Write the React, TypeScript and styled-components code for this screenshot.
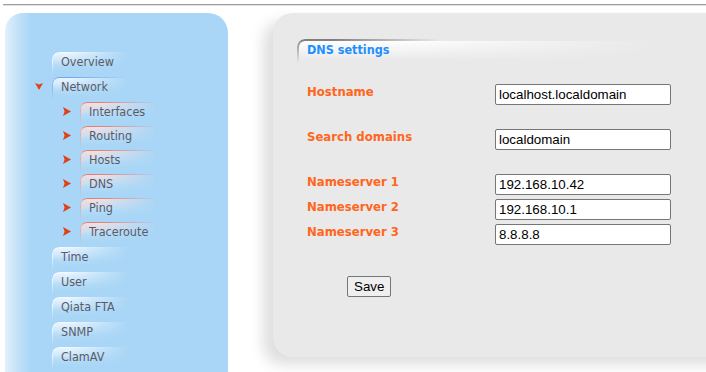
import React from 'react';
import styled, { createGlobalStyle } from 'styled-components';

const GlobalStyle = createGlobalStyle`
  html, body {
    margin: 0;
    padding: 0;
    background: #ffffff;
    overflow: hidden;
  }
  body {
    font-family: 'DejaVu Sans', Verdana, sans-serif;
  }
`;

const Page = styled.div`
  width: 706px;
  height: 372px;
  overflow: hidden;
`;

const TopRule = styled.div`
  margin: 4px 0 0 3px;
  border-top: 1px solid #9c9c9c;
  border-bottom: 1px solid #e2e2e2;
`;

const Layout = styled.div`
  display: flex;
  align-items: flex-start;
  padding: 7px 0 0 5px;
`;

const Sidebar = styled.nav`
  flex: none;
  width: 223px;
  height: 380px;
  box-sizing: border-box;
  padding-top: 39px;
  border-radius: 18px 20px 0 0;
  background: linear-gradient(90deg, #e4f0fa 0, #c4e2f8 12px, #a9d6f6 26px, #a9d6f6 100%);
`;

const NavRow = styled.div<{ $sub?: boolean }>`
  display: flex;
  align-items: flex-start;
  padding-left: ${p => (p.$sub ? 58 : 30)}px;
  height: ${p => (p.$sub ? 24 : 25)}px;
`;

const SubList = styled.div`
  padding-bottom: 1px;
`;

const ArrowSlot = styled.span`
  flex: none;
  width: 17px;
  height: 18px;
  display: flex;
  align-items: center;
`;

const Tab = styled.div<{ $sub?: boolean; $open?: boolean }>`
  position: relative;
  z-index: 0;
  height: 17px;
  line-height: 17px;
  padding: 1px 0 0 9px;
  font-family: 'DejaVu Sans Condensed', 'DejaVu Sans', sans-serif;
  font-stretch: condensed;
  font-size: 12.5px;
  color: #5b5b68;
  white-space: nowrap;

  &::before {
    content: '';
    position: absolute;
    z-index: -1;
    left: 0;
    top: 0;
    width: 80px;
    height: 22px;
    border-top-left-radius: 7px;
    border-top: 1px solid
      ${p => (p.$sub ? 'rgba(232, 118, 98, 0.9)' : p.$open ? 'rgba(110, 160, 235, 0.9)' : 'rgba(246, 251, 255, 0.95)')};
    border-left: 1px solid
      ${p => (p.$sub ? 'rgba(238, 160, 150, 0.8)' : p.$open ? 'rgba(120, 170, 240, 0.8)' : 'rgba(240, 248, 255, 0.9)')};
    background: linear-gradient(
      180deg,
      ${p => (p.$sub ? 'rgba(250, 224, 224, 0.95)' : 'rgba(238, 247, 255, 0.95)')} 0,
      rgba(210, 234, 252, 0.4) 55%,
      rgba(169, 214, 246, 0) 100%
    );
    -webkit-mask-image: linear-gradient(90deg, #000 0, #000 20%, transparent 95%),
      linear-gradient(180deg, #000 0, #000 40%, transparent 100%);
    -webkit-mask-composite: source-in;
    mask-image: linear-gradient(90deg, #000 0, #000 20%, transparent 95%),
      linear-gradient(180deg, #000 0, #000 40%, transparent 100%);
    mask-composite: intersect;
  }
`;

const Panel = styled.main`
  flex: none;
  margin-left: 45px;
  width: 480px;
  height: 344px;
  box-sizing: border-box;
  padding: 26px 0 0 24px;
  border-radius: 20px;
  background: #e9e9e9;
  box-shadow: -10px 8px 14px rgba(0, 0, 0, 0.13);
`;

const SectionTab = styled.div`
  position: relative;
  z-index: 0;
  width: 360px;
  height: 22px;
  box-sizing: border-box;
  padding: 3px 0 0 10px;
  font-family: 'DejaVu Sans Condensed', 'DejaVu Sans', sans-serif;
  font-stretch: condensed;
  font-weight: bold;
  font-size: 12.5px;
  line-height: 16px;
  color: #1e8fff;

  &::before {
    content: '';
    position: absolute;
    z-index: -1;
    left: 0;
    top: 0;
    width: 140px;
    height: 22px;
    border-top-left-radius: 8px;
    border-top: 2px solid #7b7b7b;
    border-left: 2px solid #8a8a8a;
    -webkit-mask-image: linear-gradient(90deg, #000 0, #000 25%, transparent 100%),
      linear-gradient(180deg, #000 0, transparent 100%);
    -webkit-mask-composite: source-in;
    mask-image: linear-gradient(90deg, #000 0, #000 25%, transparent 100%),
      linear-gradient(180deg, #000 0, transparent 100%);
    mask-composite: intersect;
  }

  &::after {
    content: '';
    position: absolute;
    z-index: -2;
    left: 2px;
    top: 2px;
    width: 360px;
    height: 20px;
    border-top-left-radius: 6px;
    background: linear-gradient(180deg, rgba(255, 255, 255, 0.95) 0, rgba(255, 255, 255, 0) 100%);
    -webkit-mask-image: linear-gradient(90deg, #000 0, #000 30%, transparent 100%);
    mask-image: linear-gradient(90deg, #000 0, #000 30%, transparent 100%);
  }
`;

const Form = styled.form`
  margin-top: 23px;
  padding-left: 10px;
`;

const FieldRow = styled.div<{ $spaced?: boolean }>`
  display: grid;
  grid-template-columns: 188px 176px;
  margin-bottom: ${p => (p.$spaced ? 24 : 4)}px;
`;

const Label = styled.label`
  font-family: 'DejaVu Sans Condensed', 'DejaVu Sans', sans-serif;
  font-stretch: condensed;
  font-weight: bold;
  font-size: 13px;
  line-height: 15px;
  color: #ff661c;
`;

const TextInput = styled.input`
  width: 176px;
  height: 21px;
  box-sizing: border-box;
  margin: 0;
  padding: 1px 3px;
  border: 1px solid #767676;
  border-radius: 2px;
  background: #ffffff;
  font-family: 'Liberation Sans', Arial, sans-serif;
  font-size: 13.33px;
  color: #000000;
  outline: none;
`;

const Actions = styled.div`
  margin-top: 31px;
  padding-left: 40px;
`;

const Button = styled.button`
  height: 21px;
  padding: 0 6px;
  border: 1px solid #767676;
  border-radius: 2px;
  background: #efefef;
  font-family: 'Liberation Sans', Arial, sans-serif;
  font-size: 13.33px;
  color: #000000;
`;

const RightArrow = () => (
  <svg width="8" height="9" viewBox="0 0 8 9">
    <polygon points="0,0 8,4.5 0,9 1.6,4.5" fill="#e2401b" />
  </svg>
);

const DownArrow = () => (
  <svg width="8" height="7" viewBox="0 0 8 7">
    <polygon points="0,0 4,1.4 8,0 4,7" fill="#e2401b" />
  </svg>
);

const topBefore = ['Overview'];
const networkItems = ['Interfaces', 'Routing', 'Hosts', 'DNS', 'Ping', 'Traceroute'];
const topAfter = ['Time', 'User', 'Qiata FTA', 'SNMP', 'ClamAV'];

const fields = [
  { label: 'Hostname', value: 'localhost.localdomain', spaced: true },
  { label: 'Search domains', value: 'localdomain', spaced: true },
  { label: 'Nameserver 1', value: '192.168.10.42' },
  { label: 'Nameserver 2', value: '192.168.10.1' },
  { label: 'Nameserver 3', value: '8.8.8.8' },
];

const App = () => {
  return (
    <Page>
      <GlobalStyle />
      <TopRule />
      <Layout>
        <Sidebar>
          {topBefore.map(item => (
            <NavRow key={item}>
              <ArrowSlot />
              <Tab>{item}</Tab>
            </NavRow>
          ))}
          <NavRow>
            <ArrowSlot>
              <DownArrow />
            </ArrowSlot>
            <Tab $open>Network</Tab>
          </NavRow>
          <SubList>
            {networkItems.map(item => (
              <NavRow key={item} $sub>
                <ArrowSlot>
                  <RightArrow />
                </ArrowSlot>
                <Tab $sub>{item}</Tab>
              </NavRow>
            ))}
          </SubList>
          {topAfter.map(item => (
            <NavRow key={item}>
              <ArrowSlot />
              <Tab>{item}</Tab>
            </NavRow>
          ))}
          <NavRow>
            <ArrowSlot />
            <Tab aria-hidden="true" />
          </NavRow>
        </Sidebar>
        <Panel>
          <SectionTab>DNS settings</SectionTab>
          <Form onSubmit={e => e.preventDefault()}>
            {fields.map(f => (
              <FieldRow key={f.label} $spaced={f.spaced}>
                <Label>{f.label}</Label>
                <TextInput type="text" defaultValue={f.value} />
              </FieldRow>
            ))}
            <Actions>
              <Button type="submit">Save</Button>
            </Actions>
          </Form>
        </Panel>
      </Layout>
    </Page>
  );
};

export default App;
